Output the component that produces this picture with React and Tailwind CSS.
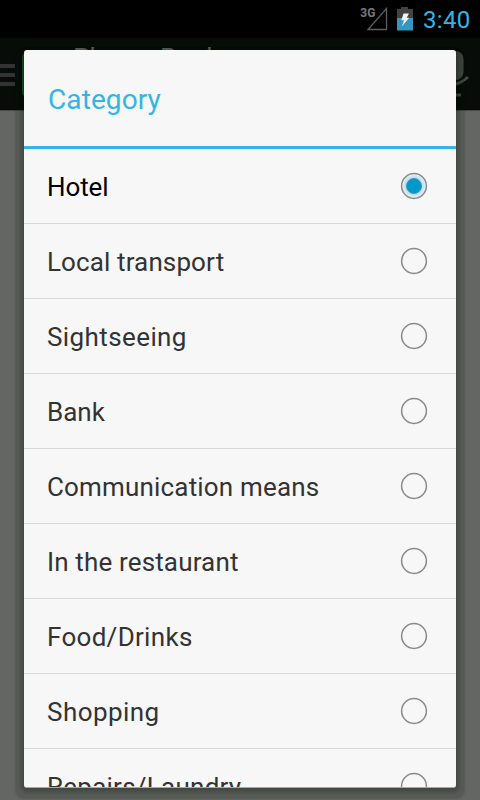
import React from 'react';

const categories = [
  { name: 'Hotel', tracking: 'tracking-[-0.1px]' },
  { name: 'Local transport', tracking: 'tracking-[0.12px]' },
  { name: 'Sightseeing', tracking: 'tracking-[0.4px]' },
  { name: 'Bank', tracking: 'tracking-normal' },
  { name: 'Communication means', tracking: 'tracking-[0.17px]' },
  { name: 'In the restaurant', tracking: 'tracking-[0.15px]' },
  { name: 'Food/Drinks', tracking: 'tracking-[0.3px]' },
  { name: 'Shopping', tracking: 'tracking-[0.45px]' },
  { name: 'Repairs/Laundry', tracking: 'tracking-[0.25px]' },
];

const StatusBar = () => (
  <div className="h-[38px] bg-black flex items-center justify-end pr-[9px]">
    <svg width="28" height="26" viewBox="0 0 28 26" className="shrink-0">
      <text x="0.3" y="11.3" fontSize="13" fontWeight="700" fill="#7a7a7a" fontFamily="Roboto, sans-serif" textLength="15" lengthAdjust="spacingAndGlyphs">
        3G
      </text>
      <path d="M26.5 2.5V23.5H8Z" fill="none" stroke="#5e5e5e" strokeWidth="1.3" />
    </svg>
    <svg width="16" height="24" viewBox="0 0 16 24" className="ml-[9px] shrink-0">
      <path d="M4 0H11V2H16V11H0V2H4Z" fill="#424242" />
      <path d="M0 11H16V23.5H0Z" fill="#3298c2" />
      <path d="M6.5 6.5H12L9.7 10.7H12.2L4.8 19.5L7 13.3H4.3Z" fill="#f4f4f4" />
    </svg>
    <span className="ml-[10px] w-[48px] pt-0.5 text-[24px] leading-[36px] tracking-[0.3px] text-[#33b5e5] whitespace-nowrap">3:40</span>
  </div>
);

const ActionBar = () => (
  <div className="h-[72px] bg-[#080c09] flex items-center overflow-hidden">
    <div className="w-[15px] pt-0.5 flex flex-col gap-[5px]">
      <div className="h-1 bg-[#343234]" />
      <div className="h-1 bg-[#343234]" />
      <div className="h-1 bg-[#343234]" />
    </div>
    <div className="ml-[7px] w-[42px] h-[43px] rounded-sm bg-[#0b5a22]" />
    <span className="ml-[9px] mb-[30px] grow text-[27px] leading-8 tracking-[-0.45px] text-[#6c6e6c]">Phrase Book</span>
    <svg width="34" height="48" viewBox="0 0 34 48" className="mr-[11px] shrink-0">
      <rect x="9" y="1" width="19.5" height="29" rx="8" fill="#454a46" />
      <path d="M2 27Q17 42 33 27" fill="none" stroke="#454a46" strokeWidth="3" />
      <path d="M9 45H26" stroke="#454a46" strokeWidth="3" />
    </svg>
  </div>
);

const Radio = ({ checked }) => (
  <svg width="28" height="28" viewBox="0 0 28 28" className="shrink-0">
    <defs>
      <radialGradient id="glow">
        <stop offset="0.6" stopColor="#a9dcf2" />
        <stop offset="1" stopColor="#f1f6f8" />
      </radialGradient>
    </defs>
    <circle cx="14" cy="14" r="12.4" fill={checked ? 'url(#glow)' : 'none'} stroke="#8a8a8a" strokeWidth="1.5" />
    {checked && <circle cx="14" cy="14" r="7.5" fill="#0099cc" stroke="#4f93ad" strokeWidth="1" />}
  </svg>
);

const CategoryDialog = () => (
  <div className="w-[432px] h-[738px] rounded-[3px] bg-[#f7f7f7] overflow-hidden flex flex-col border-b border-[#a5aaa6] shadow-[0_1px_3px_2px_rgba(0,12,0,0.18),0_1px_0_5px_rgba(0,12,0,0.04),0_2px_2px_9px_rgba(0,20,0,0.14)]">
    <div className="h-24 shrink-0 px-6 flex items-center text-[28px] text-[#33b5e5]">
      <span className="pt-[3px] tracking-[0.1px]">Category</span>
    </div>
    <div className="h-[3px] shrink-0 bg-[#33b5e5]" />
    <ul className="grow overflow-hidden">
      {categories.map(({ name, tracking }, i) => (
        <li key={name} className="h-[75px] pl-[23px] pr-7 flex items-center justify-between border-b border-[#d9d9d9] text-[26px]">
          <span className={`pt-[3px] ${tracking} ${i === 0 ? 'text-black' : 'text-[#333333]'}`}>{name}</span>
          <Radio checked={i === 0} />
        </li>
      ))}
    </ul>
  </div>
);

const App = () => (
  <div className="relative w-[480px] h-[800px] overflow-hidden bg-[#646663] font-[Roboto,sans-serif]">
    <StatusBar />
    <ActionBar />
    <div className="h-px bg-[#484848]" />
    <div className="absolute top-[50px] left-6">
      <CategoryDialog />
    </div>
  </div>
);

export default App;
